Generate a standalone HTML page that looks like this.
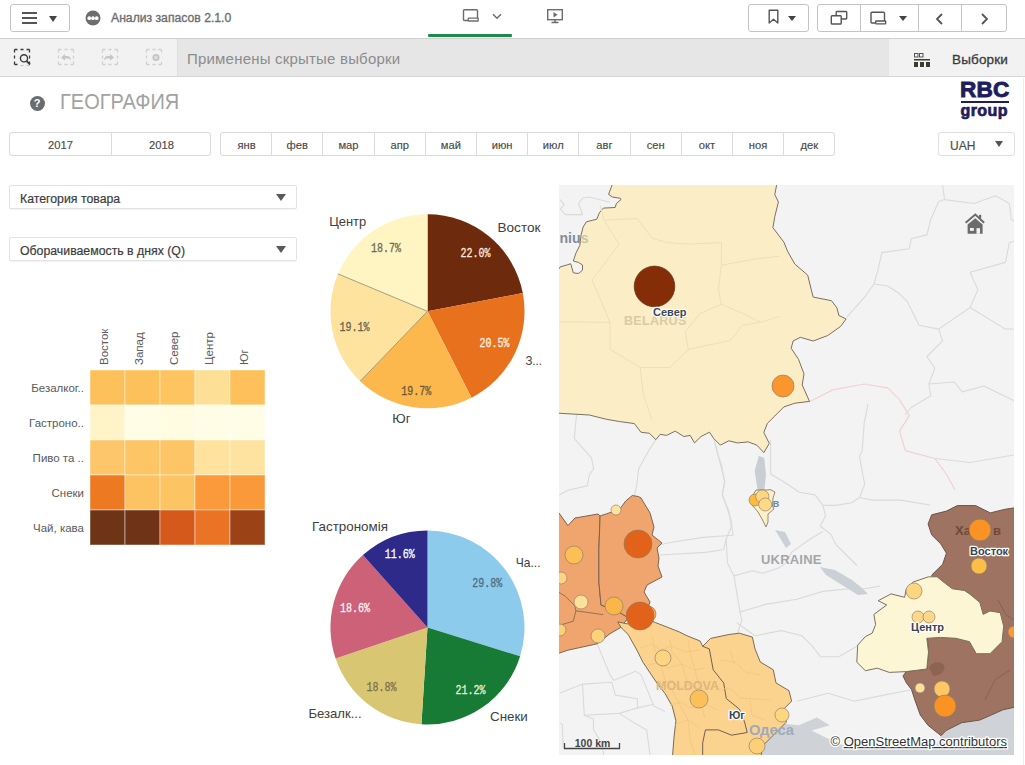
<!DOCTYPE html>
<html><head><meta charset="utf-8">
<style>
*{box-sizing:border-box;margin:0;padding:0}
html,body{width:1025px;height:765px;overflow:hidden;background:#fff;font-family:"Liberation Sans",sans-serif;color:#404040}
#top{position:absolute;left:0;top:0;width:1025px;height:39px;background:#fff;border-bottom:1px solid #d4d4d4}
.btn{position:absolute;border:1px solid #c4c4c4;border-radius:3px;background:#fff}
.bd{position:absolute;top:0;bottom:0;width:1px;background:#c4c4c4}
#tb{position:absolute;left:0;top:38px;width:1025px;height:39px;background:#f2f2f2;border-top:1px solid #d0d0d0;border-bottom:1px solid #d6d6d6}
.seg{position:absolute;top:132px;height:24px;border:1px solid #dadada;border-radius:3px;background:#fff}
.seg div{position:absolute;top:0;height:22px;border-left:1px solid #dadada;text-align:center;font-size:11.2px;line-height:25.5px;color:#4a4a4a;-webkit-text-stroke:0.15px #4a4a4a}
.seg div:first-child{border-left:none}
.dd{position:absolute;left:9px;width:288px;height:24px;border:1px solid #e3e3e3;border-radius:2px;background:#fff;font-size:12.3px;line-height:27px;padding-left:10px;color:#3c3c3c;-webkit-text-stroke:0.2px #3c3c3c;box-shadow:0 1px 1px rgba(0,0,0,0.05)}
.tri{position:absolute;width:0;height:0;border-left:5px solid transparent;border-right:5px solid transparent;border-top:8px solid #595959}
.lbl{position:absolute;font-size:13px;color:#404040;white-space:nowrap}
.pct{position:absolute;font-family:"Liberation Mono",monospace;font-size:11px;white-space:nowrap}
</style></head><body>
<div id="top">
  <div class="btn" style="left:10px;top:4px;width:60px;height:28px">
    <div style="position:absolute;left:11px;top:7px;width:15px;height:2px;background:#555"></div>
    <div style="position:absolute;left:11px;top:12px;width:15px;height:2px;background:#555"></div>
    <div style="position:absolute;left:11px;top:17px;width:15px;height:2px;background:#555"></div>
    <div class="tri" style="left:37.5px;top:10.8px;border-left-width:4.5px;border-right-width:4.5px;border-top-width:6px;border-top-color:#444"></div>
  </div>
  <svg style="position:absolute;left:85px;top:10px" width="16" height="16" viewBox="0 0 16 16"><circle cx="8" cy="8" r="7.5" fill="#6e6e6e"/><circle cx="4.3" cy="8.2" r="1.85" fill="#fff"/><circle cx="8" cy="8.2" r="1.85" fill="#fff"/><circle cx="11.7" cy="8.2" r="1.85" fill="#fff"/></svg>
  <div style="position:absolute;left:111px;top:10.5px;font-size:12.5px;color:#6e6e6e;-webkit-text-stroke:0.35px #6e6e6e;transform:scaleX(0.975);transform-origin:0 0;white-space:nowrap">Анализ запасов 2.1.0</div>
  <!-- sheet view tab -->
  <svg style="position:absolute;left:461px;top:7.3px" width="60" height="20" viewBox="0 0 60 20">
    <path d="M7,13.5 h-3.5 q-1,0 -1,-1 v-8.7 q0,-1 1,-1 h12 q1,0 1,1 v7.7" fill="none" stroke="#6d6d6d" stroke-width="1.4"/><rect x="7.2" y="11.2" width="10" height="2.8" rx="0.6" fill="none" stroke="#6d6d6d" stroke-width="1.3"/>
    <path d="M32,7.3 l4,4 l4,-4" fill="none" stroke="#6d6d6d" stroke-width="1.5"/>
  </svg>
  <div style="position:absolute;left:427.5px;top:34px;width:84px;height:2.5px;background:#1e8a4c;border-radius:1px"></div>
  <svg style="position:absolute;left:545px;top:7px" width="20" height="18" viewBox="0 0 20 18">
    <rect x="2.7" y="2.7" width="14.6" height="10" fill="none" stroke="#6d6d6d" stroke-width="1.4"/>
    <path d="M8.5,5 l4,2.7 l-4,2.7 z" fill="#6d6d6d"/>
    <path d="M10,12.7 v2.5 M6.5,15.5 h7" stroke="#6d6d6d" stroke-width="1.6"/>
  </svg>
  <!-- right buttons -->
  <div class="btn" style="left:748px;top:4px;width:61px;height:28px">
    <svg style="position:absolute;left:18.5px;top:4px" width="14" height="16" viewBox="0 0 14 16"><path d="M1.2,1.2 h8.6 v12.8 l-4.3,-3.8 l-4.3,3.8 z" fill="none" stroke="#555" stroke-width="1.4" stroke-linejoin="round"/></svg>
    <div class="tri" style="left:38.8px;top:11px;border-left-width:4.2px;border-right-width:4.2px;border-top-width:5.5px;border-top-color:#444"></div>
  </div>
  <div class="btn" style="left:817px;top:4px;width:190px;height:28px">
    <div class="bd" style="left:42px"></div>
    <div class="bd" style="left:100px"></div>
    <div class="bd" style="left:143px"></div>
    <svg style="position:absolute;left:12px;top:5px" width="18" height="16" viewBox="0 0 18 16"><path d="M6.2,5.8 v-3.6 q0,-0.7 0.7,-0.7 h9.1 q0.7,0 0.7,0.7 v6.1 q0,0.7 -0.7,0.7 h-4.8" fill="none" stroke="#555" stroke-width="1.4"/><rect x="1.3" y="5.8" width="9.9" height="8.2" rx="0.8" fill="none" stroke="#555" stroke-width="1.4"/></svg>
    <svg style="position:absolute;left:52px;top:6px" width="18" height="15" viewBox="0 0 18 15"><path d="M5.5,12 h-3.5 q-1,0 -1,-1 v-8.7 q0,-1 1,-1 h11.5 q1,0 1,1 v7.7" fill="none" stroke="#555" stroke-width="1.4"/><rect x="5.7" y="10" width="10" height="2.8" rx="0.6" fill="none" stroke="#555" stroke-width="1.3"/></svg>
    <div class="tri" style="left:81.3px;top:11px;border-left-width:4.2px;border-right-width:4.2px;border-top-width:5.5px;border-top-color:#444"></div>
    <svg style="position:absolute;left:116px;top:7px" width="12" height="14" viewBox="0 0 12 14"><path d="M8,2 l-5,5 l5,5" fill="none" stroke="#555" stroke-width="1.8"/></svg>
    <svg style="position:absolute;left:160px;top:7px" width="12" height="14" viewBox="0 0 12 14"><path d="M4,2 l5,5 l-5,5" fill="none" stroke="#555" stroke-width="1.8"/></svg>
  </div>
</div>
<div id="tb">
  <div style="position:absolute;left:177px;top:0;width:712px;height:37px;background:#e6e6e6;border-left:1px solid #dcdcdc"></div>
  <svg style="position:absolute;left:0;top:0" width="177" height="37" viewBox="0 0 177 37">
    <rect x="14.5" y="10.5" width="15" height="15" fill="none" stroke="#3a3a3a" stroke-width="1.3" stroke-dasharray="3 3 3 3 3 0"/>
    <rect x="20" y="17" width="9" height="9" fill="#f2f2f2"/>
    <circle cx="24" cy="19.3" r="3.6" fill="none" stroke="#3a3a3a" stroke-width="1.4"/><path d="M26.6,22 l3.3,3.3" stroke="#3a3a3a" stroke-width="1.8"/>
    <g stroke="#d0d0d0" stroke-width="1.3" fill="none" stroke-dasharray="3 3 3 3 3 0">
      <rect x="58.5" y="10.5" width="15" height="15"/><rect x="102.5" y="10.5" width="15" height="15"/><rect x="146.5" y="10.5" width="15" height="15"/>
    </g>
    <rect x="60" y="14" width="12" height="9" fill="#f2f2f2"/><rect x="104" y="14" width="12" height="9" fill="#f2f2f2"/><rect x="150" y="14" width="12" height="9" fill="#f2f2f2"/>
    <path d="M61,18.5 l4,-3.5 v2 h2 c2.5,0 4,1.5 4,4.5 c-1,-1.5 -2,-2 -4,-2 h-2 v2.2 z" fill="#c6c6c6"/>
    <path d="M114,18.5 l-4,-3.5 v2 h-2 c-2.5,0 -4,1.5 -4,4.5 c1,-1.5 2,-2 4,-2 h2 v2.2 z" fill="#c6c6c6"/>
    <circle cx="156" cy="18.5" r="3.6" fill="#c6c6c6"/><path d="M154.5,17 l3,3 M157.5,17 l-3,3" stroke="#f2f2f2" stroke-width="1"/>
  </svg>
  <div style="position:absolute;left:187px;top:11px;font-size:15px;color:#8c8c8c;letter-spacing:0.2px">Применены скрытые выборки</div>
  <svg style="position:absolute;left:913px;top:12.5px" width="18" height="16" viewBox="0 0 18 16">
    <rect x="1.5" y="1.5" width="3.5" height="3.5" fill="none" stroke="#555" stroke-width="1"/>
    <rect x="6.5" y="1.5" width="3.5" height="3.5" fill="none" stroke="#555" stroke-width="1"/>
    <rect x="1" y="7" width="16" height="1.5" fill="#3d3a30"/>
    <rect x="1" y="10" width="4" height="5" fill="#3d3a30"/><rect x="7" y="10" width="4" height="5" fill="#3d3a30"/><rect x="13" y="10" width="4" height="5" fill="#3d3a30"/>
  </svg>
  <div style="position:absolute;left:952px;top:12.5px;font-size:13.5px;color:#3a3a3a;letter-spacing:0.15px;-webkit-text-stroke:0.3px #3a3a3a">Выборки</div>
</div>
<!-- title -->
<div style="position:absolute;left:29.5px;top:96px;width:15px;height:15px;border-radius:50%;background:#6c6c6c;color:#fff;font-size:11px;font-weight:bold;text-align:center;line-height:15px">?</div>
<div style="position:absolute;left:60px;top:89.8px;font-size:21.5px;color:#a2a2a2;transform:scaleX(0.93);transform-origin:0 0">ГЕОГРАФИЯ</div>
<!-- logo -->
<div style="position:absolute;left:960px;top:76.5px;font-size:22.6px;font-weight:bold;color:#1f1d5c;letter-spacing:0.2px;-webkit-text-stroke:0.9px #1f1d5c">RBC</div>
<div style="position:absolute;left:960.5px;top:101.3px;width:48.5px;height:1.8px;background:#1f1d5c"></div>
<div style="position:absolute;left:960.5px;top:101.5px;font-size:16px;font-weight:bold;color:#1f1d5c;letter-spacing:0.4px;-webkit-text-stroke:0.7px #1f1d5c">group</div>
<!-- year/month -->
<div class="seg" style="left:9px;width:202px">
  <div style="left:0;width:101px">2017</div><div style="left:101px;width:100px">2018</div>
</div>
<div class="seg" style="left:220px;width:615px">
  <div style="left:0.00px;width:51.20px">янв</div><div style="left:50.20px;width:51.20px">фев</div><div style="left:101.40px;width:51.20px">мар</div><div style="left:152.60px;width:51.20px">апр</div><div style="left:203.80px;width:51.20px">май</div><div style="left:255.00px;width:51.20px">июн</div><div style="left:306.20px;width:51.20px">июл</div><div style="left:357.40px;width:51.20px">авг</div><div style="left:408.60px;width:51.20px">сен</div><div style="left:459.80px;width:51.20px">окт</div><div style="left:511.00px;width:51.20px">ноя</div><div style="left:562.20px;width:51.20px">дек</div>
</div>
<div class="seg" style="left:938px;width:77px;border-color:#e0e0e0">
  <div style="left:11px;width:30px;text-align:left;font-size:12px;line-height:26px">UAH</div>
</div>
<div class="tri" style="left:995px;top:141.4px;border-left-width:4px;border-right-width:4px;border-top-width:6px;border-top-color:#555"></div>
<!-- dropdowns -->
<div class="dd" style="top:185px">Категория товара</div>
<div class="tri" style="left:276.3px;top:194px;border-left-width:5px;border-right-width:5px;border-top-width:7px"></div>
<div class="dd" style="top:237px">Оборачиваемость в днях (Q)</div>
<div class="tri" style="left:276.3px;top:246px;border-left-width:5px;border-right-width:5px;border-top-width:7px"></div>
<!--CHARTS-->
<svg style="position:absolute;left:0;top:0" width="300" height="560">
<rect x="90" y="370" width="35" height="35" fill="#fdc15b" stroke="#fff" stroke-opacity="0.45" stroke-width="1"/>
<rect x="125" y="370" width="35" height="35" fill="#fdc15b" stroke="#fff" stroke-opacity="0.45" stroke-width="1"/>
<rect x="160" y="370" width="35" height="35" fill="#fdc45f" stroke="#fff" stroke-opacity="0.45" stroke-width="1"/>
<rect x="195" y="370" width="35" height="35" fill="#fedf96" stroke="#fff" stroke-opacity="0.45" stroke-width="1"/>
<rect x="230" y="370" width="35" height="35" fill="#fdc05a" stroke="#fff" stroke-opacity="0.45" stroke-width="1"/>
<rect x="90" y="405" width="35" height="35" fill="#fff4c8" stroke="#fff" stroke-opacity="0.45" stroke-width="1"/>
<rect x="125" y="405" width="35" height="35" fill="#fffde5" stroke="#fff" stroke-opacity="0.45" stroke-width="1"/>
<rect x="160" y="405" width="35" height="35" fill="#fffce1" stroke="#fff" stroke-opacity="0.45" stroke-width="1"/>
<rect x="195" y="405" width="35" height="35" fill="#fffde6" stroke="#fff" stroke-opacity="0.45" stroke-width="1"/>
<rect x="230" y="405" width="35" height="35" fill="#fffde5" stroke="#fff" stroke-opacity="0.45" stroke-width="1"/>
<rect x="90" y="440" width="35" height="35" fill="#fdc66a" stroke="#fff" stroke-opacity="0.45" stroke-width="1"/>
<rect x="125" y="440" width="35" height="35" fill="#fdc566" stroke="#fff" stroke-opacity="0.45" stroke-width="1"/>
<rect x="160" y="440" width="35" height="35" fill="#fdc565" stroke="#fff" stroke-opacity="0.45" stroke-width="1"/>
<rect x="195" y="440" width="35" height="35" fill="#fee29e" stroke="#fff" stroke-opacity="0.45" stroke-width="1"/>
<rect x="230" y="440" width="35" height="35" fill="#fee3a0" stroke="#fff" stroke-opacity="0.45" stroke-width="1"/>
<rect x="90" y="475" width="35" height="35" fill="#ed7a23" stroke="#fff" stroke-opacity="0.45" stroke-width="1"/>
<rect x="125" y="475" width="35" height="35" fill="#fdc363" stroke="#fff" stroke-opacity="0.45" stroke-width="1"/>
<rect x="160" y="475" width="35" height="35" fill="#fdc464" stroke="#fff" stroke-opacity="0.45" stroke-width="1"/>
<rect x="195" y="475" width="35" height="35" fill="#fa9a3a" stroke="#fff" stroke-opacity="0.45" stroke-width="1"/>
<rect x="230" y="475" width="35" height="35" fill="#fa993a" stroke="#fff" stroke-opacity="0.45" stroke-width="1"/>
<rect x="90" y="510" width="35" height="35" fill="#6e3416" stroke="#fff" stroke-opacity="0.45" stroke-width="1"/>
<rect x="125" y="510" width="35" height="35" fill="#6f3417" stroke="#fff" stroke-opacity="0.45" stroke-width="1"/>
<rect x="160" y="510" width="35" height="35" fill="#d5591a" stroke="#fff" stroke-opacity="0.45" stroke-width="1"/>
<rect x="195" y="510" width="35" height="35" fill="#eb7326" stroke="#fff" stroke-opacity="0.45" stroke-width="1"/>
<rect x="230" y="510" width="35" height="35" fill="#9b4217" stroke="#fff" stroke-opacity="0.45" stroke-width="1"/>
<text x="84" y="392" text-anchor="end" font-size="11.5" fill="#5a5a5a">Безалког..</text>
<text x="84" y="427" text-anchor="end" font-size="11.5" fill="#5a5a5a">Гастроно..</text>
<text x="84" y="462" text-anchor="end" font-size="11.5" fill="#5a5a5a">Пиво та ..</text>
<text x="84" y="497" text-anchor="end" font-size="11.5" fill="#5a5a5a">Снеки</text>
<text x="84" y="532" text-anchor="end" font-size="11.5" fill="#5a5a5a">Чай, кава</text>
<text transform="translate(108.0,365) rotate(-90)" font-size="11.5" fill="#5a5a5a">Восток</text>
<text transform="translate(143.0,365) rotate(-90)" font-size="11.5" fill="#5a5a5a">Запад</text>
<text transform="translate(178.0,365) rotate(-90)" font-size="11.5" fill="#5a5a5a">Север</text>
<text transform="translate(213.0,365) rotate(-90)" font-size="11.5" fill="#5a5a5a">Центр</text>
<text transform="translate(248.0,365) rotate(-90)" font-size="11.5" fill="#5a5a5a">Юг</text>
</svg>
<svg style="position:absolute;left:0;top:0" width="560" height="765"><g>
<path d="M427.5,311.3 L427.5,214.3 A97,97 0 0 1 522.8,293.1 Z" fill="#6e2a0c"/>
<path d="M427.5,311.3 L522.8,293.1 A97,97 0 0 1 471.5,397.7 Z" fill="#e8711d"/>
<path d="M427.5,311.3 L471.5,397.7 A97,97 0 0 1 360.2,381.2 Z" fill="#fdb84d"/>
<path d="M427.5,311.3 L360.2,381.2 A97,97 0 0 1 338.0,273.9 Z" fill="#fee39f"/>
<path d="M427.5,311.3 L338.0,273.9 A97,97 0 0 1 427.5,214.3 Z" fill="#fff5c3"/>
<path d="M427.5,627.5 L427.5,530.5 A97,97 0 0 1 520.1,656.3 Z" fill="#8ccbeb"/>
<path d="M427.5,627.5 L520.1,656.3 A97,97 0 0 1 421.4,724.3 Z" fill="#177a35"/>
<path d="M427.5,627.5 L421.4,724.3 A97,97 0 0 1 335.6,658.6 Z" fill="#d9c672"/>
<path d="M427.5,627.5 L335.6,658.6 A97,97 0 0 1 362.9,555.1 Z" fill="#cc6177"/>
<path d="M427.5,627.5 L362.9,555.1 A97,97 0 0 1 427.5,530.5 Z" fill="#2e2a8a"/></g>
<path d="M427.5,311.3 L338.0,273.9 M427.5,311.3 L360.2,381.2" stroke="#8a8a70" stroke-width="0.8"/>
<text x="329.2" y="226.2" font-size="13" fill="#404040" textLength="37" lengthAdjust="spacingAndGlyphs">Центр</text>
<text x="497.5" y="232.2" font-size="13" fill="#404040" textLength="43" lengthAdjust="spacingAndGlyphs">Восток</text>
<text x="525.4" y="364.5" font-size="13" fill="#404040" textLength="16.6" lengthAdjust="spacingAndGlyphs">З...</text>
<text x="392.3" y="422.5" font-size="13" fill="#404040" textLength="18.3" lengthAdjust="spacingAndGlyphs">Юг</text>
<text x="312" y="531.2" font-size="13" fill="#404040" textLength="76" lengthAdjust="spacingAndGlyphs">Гастрономія</text>
<text x="515.8" y="567.3" font-size="13" fill="#404040" textLength="24.7" lengthAdjust="spacingAndGlyphs">Ча...</text>
<text x="490" y="720.6" font-size="13" fill="#404040" textLength="37.8" lengthAdjust="spacingAndGlyphs">Снеки</text>
<text x="308.4" y="718.2" font-size="13" fill="#404040" textLength="53.2" lengthAdjust="spacingAndGlyphs">Безалк...</text>
<text x="370.9" y="252.1" font-family="Liberation Mono" font-size="12.5" fill="#6e6a55" stroke="#6e6a55" stroke-width="0.3" textLength="30" lengthAdjust="spacingAndGlyphs">18.7%</text>
<text x="460.4" y="256.9" font-family="Liberation Mono" font-size="12.5" fill="#fbe9dc" stroke="#fbe9dc" stroke-width="0.3" textLength="30" lengthAdjust="spacingAndGlyphs">22.0%</text>
<text x="479.4" y="347.3" font-family="Liberation Mono" font-size="12.5" fill="#fff1e6" stroke="#fff1e6" stroke-width="0.3" textLength="30" lengthAdjust="spacingAndGlyphs">20.5%</text>
<text x="401.3" y="394.6" font-family="Liberation Mono" font-size="12.5" fill="#6a5a3a" stroke="#6a5a3a" stroke-width="0.3" textLength="30" lengthAdjust="spacingAndGlyphs">19.7%</text>
<text x="339.6" y="331.1" font-family="Liberation Mono" font-size="12.5" fill="#6a6450" stroke="#6a6450" stroke-width="0.3" textLength="30" lengthAdjust="spacingAndGlyphs">19.1%</text>
<text x="384.8" y="557.8" font-family="Liberation Mono" font-size="12.5" fill="#ffffff" stroke="#ffffff" stroke-width="0.3" textLength="30" lengthAdjust="spacingAndGlyphs">11.6%</text>
<text x="472.3" y="587.1" font-family="Liberation Mono" font-size="12.5" fill="#4f6b80" stroke="#4f6b80" stroke-width="0.3" textLength="30" lengthAdjust="spacingAndGlyphs">29.8%</text>
<text x="340" y="612.2" font-family="Liberation Mono" font-size="12.5" fill="#fff3f3" stroke="#fff3f3" stroke-width="0.3" textLength="30" lengthAdjust="spacingAndGlyphs">18.6%</text>
<text x="366.6" y="690.6" font-family="Liberation Mono" font-size="12.5" fill="#7d7050" stroke="#7d7050" stroke-width="0.3" textLength="30" lengthAdjust="spacingAndGlyphs">18.8%</text>
<text x="455.5" y="693.8" font-family="Liberation Mono" font-size="12.5" fill="#e3f3dc" stroke="#e3f3dc" stroke-width="0.3" textLength="30" lengthAdjust="spacingAndGlyphs">21.2%</text>
</svg>
<!--/CHARTS-->
<!--MAP-->
<svg style="position:absolute;left:0;top:0" width="1025" height="765" viewBox="0 0 1025 765">
<defs><clipPath id="mc"><rect x="559" y="185" width="455" height="570"/></clipPath></defs>
<g clip-path="url(#mc)">
<rect x="559" y="185" width="455" height="570" fill="#f3f3f3"/>
<g fill="none" stroke="#dadada" stroke-width="1.1" stroke-linejoin="round">
<path d="M942.6,185.0 L944.6,199.6 L938.7,201.6 L930.8,219.2 L926.9,234.9 L911.2,238.8 L909.3,248.7 L881.8,252.6 L877.9,270.2 L874.0,284.0 L887.7,286.0 L899.5,293.8 L907.3,301.6 L919.1,325.2 L938.7,329.1 L970.1,307.5 L977.9,289.9 L970.1,272.2 L1005.4,262.4 L1009.3,242.8 L1016.0,240.8"/>
<path d="M944.6,199.6 L974.0,203.5 L995.6,195.7 L1009.3,203.5 L1011.3,219.2 L1016.0,222.0"/>
<path d="M970.1,307.5 L1005.4,329.1 L1016.0,329.0"/>
<path d="M874.0,284.0 L864.2,297.7 L846.5,317.3"/>
<path d="M938.7,329.1 L942.6,340.8 L926.9,356.5 L934.8,368.3 L928.9,384.0 L930.8,395.8 L911.2,407.5 L905.0,415.0"/>
<path d="M928.9,384.0 L954.4,382.0 L962.2,391.9 L983.8,386.0 L1016.0,401.7"/>
<path d="M868.1,403.6 L864.2,423.2 L862.2,450.7"/>
<path d="M934.8,458.5 L970.1,462.5 L1016.0,454.6"/>
<path d="M576.5,415.0 L574.3,438.6 L591.5,457.9 L593.6,468.7 L589.3,475.1 L587.2,485.9 L567.9,490.2 L559.0,495.0"/>
<path d="M655.9,439.7 L649.4,449.4 L638.7,468.7 L636.6,485.9 L634.4,495.5"/>
<path d="M713.8,438.6 L718.1,455.8 L721.4,464.4 L724.6,481.6 L722.4,494.4 L726.7,507.3 L731.0,520.2 L733.1,535.2 L703.1,537.4 L668.8,542.7 L659.0,545.0"/>
<path d="M715.7,445.2 L719.6,460.9 L724.8,481.8 L722.2,494.9 L728.8,510.6 L731.4,526.3 L726.1,539.3 L723.5,549.8 L705.2,552.4 L660.0,555.0"/>
<path d="M726.1,539.3 L727.5,562.9 L734.0,575.9 L752.3,570.7 L762.7,573.3 L778.4,568.1 L786.3,562.9 L791.5,552.4 L809.8,539.3 L822.9,531.5"/>
<path d="M770.6,440.0 L770.6,474.0 L783.7,481.8 L799.3,492.3 L815.0,494.9 L822.9,505.4 L825.5,515.8 L820.3,526.3 L830.7,534.1 L835.9,544.6 L846.4,555.0 L856.9,565.5"/>
<path d="M862.2,450.7 L859.5,455.7 L862.1,471.4 L864.7,484.4 L859.5,497.5 L872.5,500.1 L900.0,500.1 L930.0,505.0"/>
<path d="M822.9,505.4 L835.9,505.4 L851.6,502.7 L859.5,497.5"/>
<path d="M734.0,575.9 L736.6,591.6 L739.2,607.3 L741.8,620.4 L735.3,640.0"/>
<path d="M739.3,612.3 L765.5,604.4 L796.9,599.2 L823.0,591.4 L849.2,588.8 L864.8,588.8 L880.0,586.1"/>
<path d="M755.0,635.8 L781.2,630.6 L802.1,635.8 L812.5,646.3 L820.4,656.7 L838.7,656.7 L857.0,646.3"/>
<path d="M796.9,701.2 L828.2,693.3 L854.4,701.2 L880.0,695.9 L910.0,690.0"/>
<path d="M736.7,622.7 L755.0,635.8"/>
<path d="M597.1,643.8 L610.0,674.9 L613.6,680.4 L635.6,671.3 L641.1,674.9 L653.9,706.1 L664.9,711.6"/>
<path d="M559.6,693.3 L582.5,684.1 L611.8,682.3 L615.4,695.1 L637.4,698.8 L637.4,707.9 L653.9,704.2"/>
<path d="M582.5,684.1 L584.3,715.2 L593.5,718.9 L593.5,729.9 L599.0,739.0 L602.6,748.2 L604.0,756.0"/>
<path d="M584.3,715.2 L619.1,713.4 L637.4,707.9"/>
<path d="M619.1,713.4 L633.8,722.6 L646.6,729.9 L650.2,756.0"/>
<path d="M559.6,722.6 L562.3,724.4 L563.2,748.2"/>
<path d="M1000.0,560.0 L1014.0,570.0"/>
<path d="M560.2,199.6 L564.2,204.8 L560.2,208.8 L565.5,214.6 L582.5,214.6 L578.5,203.5 L582.5,198.3 L589.0,197.0 L609.9,202.2"/>
</g>
<path d="M809.2,401.7 L832.8,389.9 L864.2,384.0 L887.7,387.9 L899.5,399.7 L909.3,415.4 L899.5,431.1 L905.3,450.7 L934.8,458.5 L946.5,474.2 L955.0,490.0" fill="none" stroke="#f1d2d2" stroke-width="1.2"/>
<path d="M760.0,725.3 L775.5,722.7 L798.8,725.3 L816.9,717.6 L829.8,725.3 L811.7,730.5 L824.6,737.0 L838.0,743.0 L850.0,748.0 L1016.0,748.0 L1016.0,760.0 L760.0,760.0 Z" fill="#cfd3d8"/>
<path d="M935.0,748.0 L941.0,735.7 L946.1,730.5 L961.7,722.7 L979.7,717.6 L1003.0,709.8 L1016.0,706.0 L1016.0,760.0 L935.0,760.0 Z" fill="#cfd3d8"/>
<path d="M880,748 L900,744 L915,748 Z M845,740 L870,742 L860,748 Z" fill="#e4e6e8"/>
<path d="M758.9,455.8 L764.3,458 L766,475 L764.3,490.2 L758,492 L754.6,470.8 Z" fill="#c9ced5"/>
<path d="M820,567 L835,570 L852,580 L862,588 L868,594 L858,595 L842,585 L826,575 Z" fill="#cbd0d6"/>
<path d="M775,530 L785,532 L791,544 L786,548 L780,538 Z" fill="#cbd0d6"/>
<path d="M612.0,185.2 L608.6,194.4 L612.5,197.0 L620.4,198.3 L621.0,199.6 L616.4,203.5 L615.1,207.5 L603.4,208.1 L599.4,212.7 L596.8,219.2 L586.4,221.8 L583.1,227.1 L581.1,234.9 L579.8,245.4 L575.9,253.2 L573.3,261.0 L578.5,262.4 L582.5,265.0 L582.5,270.2 L578.5,273.5 L573.3,272.8 L570.7,263.7 L566.8,265.0 L560.2,266.9 L559.0,268.9 L555.0,269.0 L555.0,413.0 L572.2,414.0 L589.3,415.0 L606.5,419.3 L619.4,421.5 L634.4,423.6 L640.9,432.2 L649.4,433.3 L655.9,439.7 L660.2,434.3 L666.6,435.4 L675.2,431.1 L683.8,436.5 L690.2,435.4 L694.5,442.9 L701.0,436.5 L709.5,432.2 L713.8,438.6 L720.3,445.1 L728.9,440.8 L737.4,442.9 L748.2,441.9 L756.8,445.1 L763.8,452.6 L769.3,443.4 L763.8,432.5 L767.4,423.3 L774.8,416.0 L783.9,406.9 L794.9,403.2 L809.5,401.4 L802.2,384.9 L804.0,373.9 L798.5,359.3 L791.2,348.3 L793.1,341.0 L800.4,337.3 L813.2,341.0 L827.8,335.5 L840.6,326.4 L846.1,319.0 L838.8,315.4 L837.0,308.0 L831.5,300.7 L813.2,297.1 L811.3,289.8 L807.7,275.1 L794.9,264.2 L787.6,251.3 L783.9,242.2 L772.9,227.6 L774.8,216.6 L778.4,202.0 L774.8,194.6 L776.6,185.1 L776.0,180.0 L611.0,180.0 Z" fill="#fbedc5" stroke="#7b6f63" stroke-width="1"/>
<g fill="none" stroke="#eedfb6" stroke-width="1">
<path d="M604.0,220.0 L637.1,218.6 L652.2,238.1 L667.2,242.6 L688.3,244.1 L721.4,242.6 L721.4,265.2 L718.3,289.2 L721.4,304.3 L700.3,313.3 L685.3,331.4 L688.3,349.4 L670.2,367.4 L640.2,367.4 L610.1,349.4 L610.1,322.3 L592.0,280.2 L619.1,244.1 L604.0,220.0"/>
<path d="M721.4,265.2 L754.4,259.2 L780.0,256.2"/>
<path d="M721.4,304.3 L742.4,313.3 L760.5,322.3 L780.0,316.3"/>
<path d="M688.3,349.4 L730.4,340.4 L742.4,325.3 L760.5,322.3"/>
<path d="M640.2,367.4 L643.2,394.5 L652.2,420.0"/>
<path d="M559.0,322.0 L610.1,322.3"/>
<path d="M604.0,220.0 L600.0,205.0"/>
</g>
<path d="M555.0,512.0 L559.0,513.0 L567.9,525.6 L575.0,518.0 L598.0,514.0 L600.1,515.9 L598.9,548.7 L598.9,582.1 L601.0,605.1 L617.7,611.4 L628.2,617.7 L620.9,627.3 L610.0,633.7 L597.1,643.8 L567.8,650.2 L559.6,653.0 L555.0,654.0 Z" fill="#f0a56e" stroke="#7b6450" stroke-width="1"/>
<path d="M600.1,515.9 L606.5,513.8 L619.4,509.5 L625.8,500.9 L632.3,495.5 L638.7,496.6 L641.0,498.0 L644.0,503.0 L650.0,513.0 L654.0,527.0 L652.0,535.0 L662.0,543.0 L657.0,548.0 L659.0,558.0 L658.0,566.0 L662.0,577.0 L647.0,585.0 L644.0,592.0 L650.0,602.0 L644.9,615.6 L628.2,617.7 L617.7,611.4 L601.0,605.1 L598.9,582.1 L598.9,548.7 Z" fill="#f0a56e" stroke="#7b6450" stroke-width="1"/>
<path d="M559,592.4 L565.5,596.4 L574.6,605.5 L575.9,610.8 L573.3,621.2 L560.2,625.1 M575.9,610.8 L594.2,613.4 L603.4,614.7" fill="none" stroke="#8a6a55" stroke-width="0.9"/>
<path d="M617.7,621.9 L628.2,624.0 L644.9,617.7 L655.7,622.7 L666.1,626.7 L679.2,631.9 L687.1,635.8 L700.1,641.0 L702.7,646.3 L710.6,638.4 L728.9,634.5 L739.3,633.2 L752.4,637.1 L755.0,648.9 L760.3,662.0 L773.3,669.8 L776.0,682.9 L789.0,690.7 L791.6,701.2 L783.8,709.0 L786.4,722.1 L776.0,732.5 L762.9,745.6 L760.3,760.0 L672.2,760.0 L674.0,737.2 L675.9,720.7 L672.2,706.1 L664.9,693.3 L657.6,684.1 L650.2,673.1 L642.9,662.1 L637.4,651.1 L628.3,634.7 L620.9,627.3 Z" fill="#fbd38e" stroke="#7b6a55" stroke-width="1"/>
<path d="M702.7,646.3 L709.3,648.9 L713.2,669.8 L723.7,682.9 L726.3,698.6 L739.3,709 L744.6,722.1 L747.2,732.5 L731.5,735.2 L718.4,729.9 L705.4,729.9 L702.7,743 L702.7,760" fill="none" stroke="#6f6050" stroke-width="1"/>
<g fill="none" stroke="#f3c47f" stroke-width="0.8"><path d="M640,648 L652,644 L660,650 L672,646 L685,652 L700,650"/><path d="M648,665 L660,662 L668,668 L682,664 L695,670 L705,668"/><path d="M660,684 L672,680 L680,688 L690,684 L700,690 L712,688"/><path d="M670,705 L682,702 L690,708 L705,704 L718,710"/><path d="M675,725 L688,720 L700,728"/><path d="M652,636 L655,650 L660,662 L665,680 L672,690 L680,705 L688,720 L690,740 L695,755"/><path d="M670,640 L672,652 L682,664 L688,684 L700,700 L705,718"/><path d="M688,640 L690,652 L695,670 L700,690"/><path d="M720,660 L735,662 L745,672 L760,675 M715,690 L730,688 L740,698 L770,700 M730,650 L735,665 M750,700 L752,715 L765,720"/></g>
<path d="M928.1,523.9 L931.7,514.8 L946.4,511.1 L957.3,505.6 L975.6,505.6 L990.3,512.9 L1004.9,509.3 L1020.0,507.0 L1020.0,706.0 L1003.0,709.8 L979.7,720.1 L961.7,722.7 L946.1,730.5 L941.0,735.7 L928.0,725.3 L920.3,715.0 L914.9,700.0 L911.5,689.5 L906.3,682.7 L903.0,675.9 L906.3,671.6 L926.8,669.0 L928.5,652.0 L926.8,630.0 L940.0,625.0 L960.0,625.0 L985.0,630.0 L970.0,610.0 L955.0,600.0 L939.0,590.0 L931.7,575.1 L942.7,564.2 L946.4,553.2 L940.9,544.0 L931.7,534.9 Z" fill="#9e7361" stroke="#6b5448" stroke-width="1"/>
<path d="M998,600 L1006,615 L1014,620 M985,700 L995,680 L1010,670" fill="none" stroke="#7d6050" stroke-width="0.8"/>
<path d="M929,668 C930,662 940,660 944,665 C946,671 940,676 933,676 Z" fill="#8d6352"/>
<path d="M891.0,593.9 L878.2,600.7 L886.7,605.0 L873.9,614.4 L875.6,624.6 L872.2,633.2 L865.4,636.6 L857.7,645.1 L856.8,662.2 L865.4,670.7 L877.3,668.2 L889.3,672.4 L906.3,671.6 L926.8,669.0 L928.5,652.0 L926.8,638.3 L940.5,637.4 L955.9,638.3 L969.5,641.7 L976.3,653.7 L990.0,653.7 L1002.0,641.7 L1003.7,626.3 L1000.2,612.7 L990.0,611.0 L983.2,614.4 L979.8,602.4 L969.5,593.9 L964.4,590.5 L952.4,588.8 L945.6,583.7 L937.1,576.8 L928.5,576.8 L913.2,582.0 L906.3,588.8 L904.6,597.3 Z" fill="#fcf6d5" stroke="#7b705f" stroke-width="1"/>
<path d="M750,500 L756,490 L768,490 L770,489.5 L775,492 L773,498 L772.5,506 L774,509 L768,514 L768,522 L766,527 L762,519 L758,512 L752,505 Z" fill="#fbf0c6" stroke="#7b6f63" stroke-width="0.8"/>
<g stroke="#8a7a6a" stroke-width="0.8" stroke-opacity="0.8">
<circle cx="783" cy="386" r="11" fill="#fb962f"/>
<circle cx="648" cy="614" r="8" fill="#f9a54a"/>
<circle cx="638" cy="544" r="14" fill="#e2621a"/>
<circle cx="640" cy="616" r="14" fill="#e2621a"/>
<circle cx="574" cy="555" r="9" fill="#fbbf55"/>
<circle cx="616" cy="510" r="5" fill="#fde39b"/>
<circle cx="561" cy="578" r="6" fill="#fdd580"/>
<circle cx="581" cy="602" r="7" fill="#fde19a"/>
<circle cx="614" cy="606" r="9" fill="#fbb648"/>
<circle cx="598" cy="636" r="7" fill="#fdd27a"/>
<circle cx="663" cy="658" r="8" fill="#fdd47f"/>
<circle cx="699" cy="699" r="9" fill="#fbc158"/>
<circle cx="782" cy="715" r="7" fill="#fdd680"/>
<circle cx="757" cy="746" r="8" fill="#fdcf76"/>
<circle cx="560" cy="630" r="6" fill="#fdcf76"/>
<circle cx="755" cy="500" r="6" fill="#fbbb3e"/>
<circle cx="762.3" cy="496.5" r="6.6" fill="#fdd684"/>
<circle cx="765.2" cy="504.5" r="6.5" fill="#fdd985"/>
<circle cx="980" cy="530" r="11" fill="#fb9324"/>
<circle cx="979" cy="566" r="8" fill="#fbbf48"/>
<circle cx="914" cy="591" r="8" fill="#fdd67f"/>
<circle cx="918" cy="617" r="6" fill="#fdd88a"/>
<circle cx="929" cy="617" r="6" fill="#fdd88a"/>
<circle cx="920" cy="688" r="5" fill="#fde09a"/>
<circle cx="942" cy="689" r="8" fill="#fdc864"/>
<circle cx="945" cy="706" r="11" fill="#fb9324"/>
<circle cx="1014" cy="632" r="6" fill="#fb9a33"/>
</g>
<text x="559.5" y="243" font-size="14" font-weight="bold" fill="#7f8c9d" textLength="29" lengthAdjust="spacingAndGlyphs">niu<tspan fill="#c9c6a6">s</tspan></text>
<text x="624" y="325" font-size="12.5" font-weight="bold" fill="#d8cba6" letter-spacing="0.3">BELARUS</text>
<circle cx="654.5" cy="286.4" r="20.3" fill="#852d06" stroke="#6a3a20" stroke-width="0.8"/>
<text x="653" y="316" font-size="11" font-weight="bold" fill="#404852" paint-order="stroke" stroke="#fff" stroke-width="2.5" stroke-linejoin="round">Север</text>
<text x="761" y="564" font-size="13" font-weight="bold" fill="#a4a6a9" letter-spacing="0.2">UKRAINE</text>
<text x="656" y="690" font-size="12.5" font-weight="bold" fill="#dcb77e">MOLDOVA</text>
<text x="729" y="719" font-size="11" font-weight="bold" fill="#3c4350" paint-order="stroke" stroke="#fff" stroke-width="2.5" stroke-linejoin="round">Юг</text>
<text x="749" y="734.5" font-size="14" font-weight="bold" fill="#9eaabb" textLength="45" lengthAdjust="spacingAndGlyphs">Одеса</text>
<text x="955" y="535" font-size="13" font-weight="bold" fill="#6e4a3a">Ха</text><text x="993" y="535" font-size="13" font-weight="bold" fill="#6e4a3a">в</text>
<circle cx="980" cy="530" r="11" fill="#fb9324" stroke="#8a7a6a" stroke-width="0.8"/>
<text x="970" y="555" font-size="11" font-weight="bold" fill="#3c4350" paint-order="stroke" stroke="#fff" stroke-width="2.5" stroke-linejoin="round">Восток</text>
<text x="911" y="631" font-size="11" font-weight="bold" fill="#3c4350" paint-order="stroke" stroke="#fff" stroke-width="2.5" stroke-linejoin="round">Центр</text>
<text x="772.5" y="506.5" font-size="11" font-weight="bold" fill="#7388a8">в</text>
<path d="M564.5,743 v5.5 h55 v-5.5" fill="none" stroke="#444" stroke-width="1.3"/>
<text x="574.8" y="747" font-size="11" font-weight="bold" fill="#444" textLength="35.5" lengthAdjust="spacingAndGlyphs">100 km</text>
<text x="830.5" y="746" font-size="12" fill="#333" textLength="176.5" lengthAdjust="spacingAndGlyphs" paint-order="stroke" stroke="#fff" stroke-width="2.5" stroke-linejoin="round">© <tspan text-decoration="underline">OpenStreetMap contributors</tspan></text>
<path d="M965.6,222.8 L975.3,214.6 L984.1,222.8" fill="none" stroke="#6b6b6b" stroke-width="2"/><rect x="979" y="214.8" width="2.2" height="3.5" fill="#6b6b6b"/><path d="M967.6,224.6 L975.3,218.2 L982.6,224.6 V233.8 H967.6 Z" fill="#6b6b6b"/><rect x="970" y="228" width="3.8" height="2.9" fill="#f3f3f3"/><rect x="976.5" y="228.2" width="3.5" height="5.6" fill="#f3f3f3"/>
</g>
<rect x="1023" y="78" width="1" height="687" fill="#ededed"/>
</svg>
<!--/MAP-->
</body></html>
